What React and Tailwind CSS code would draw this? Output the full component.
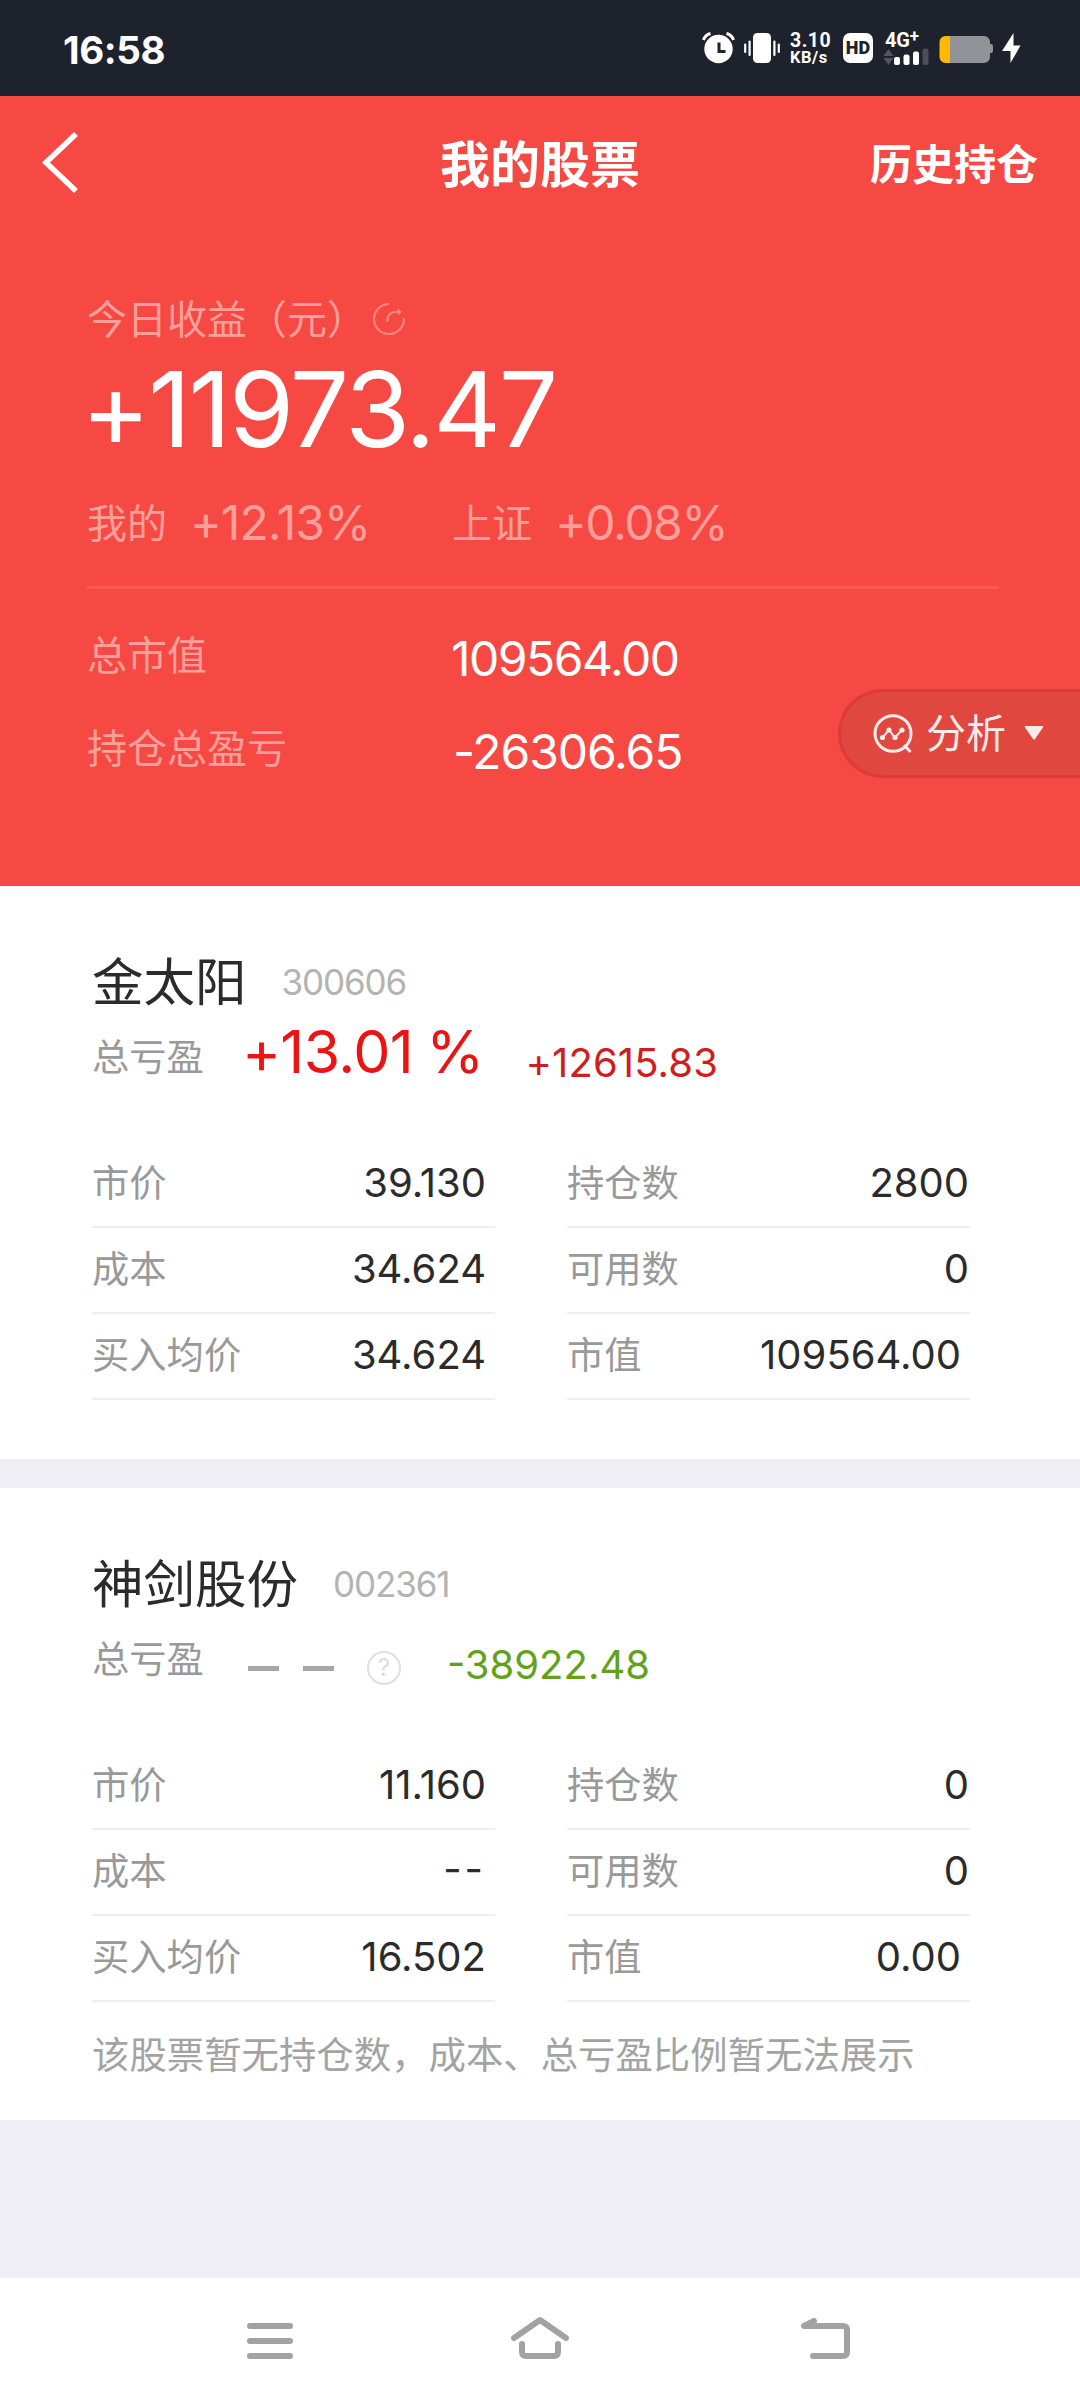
import React from 'react';

const holdings = [
    {
        name: '金太阳',
        code: '300606',
        percent: '+13.01',
        profit: '+12615.83',
        profitStyle: 'ml-[42px] tracking-[0.1px] text-[#cf1d20]',
        left: [
            {label: '市价', value: '39.130'},
            {label: '成本', value: '34.624'},
            {label: '买入均价', value: '34.624'},
        ],
        right: [
            {label: '持仓数', value: '2800', flush: true},
            {label: '可用数', value: '0', flush: true},
            {label: '市值', value: '109564.00'},
        ],
    },
    {
        name: '神剑股份',
        code: '002361',
        percent: null,
        profit: '-38922.48',
        profitStyle: 'ml-[46px] tracking-[0px] text-[#62a11a]',
        left: [
            {label: '市价', value: '11.160'},
            {label: '成本', value: '--', dashes: true},
            {label: '买入均价', value: '16.502'},
        ],
        right: [
            {label: '持仓数', value: '0', flush: true},
            {label: '可用数', value: '0', flush: true},
            {label: '市值', value: '0.00'},
        ],
        note: '该股票暂无持仓数，成本、总亏盈比例暂无法展示',
    },
];

const StatusBar = () => (
    <div className="flex h-[96px] items-center bg-[#1e222c] pl-[63px] text-white">
        <span className="pt-[4px] font-['Inter'] text-[38.5px] font-bold leading-none tracking-[-0.4px]">16:58</span>
        {/* Alarm, vibrate */}
        <svg className="ml-auto" width="80" height="32" viewBox="0 0 80 32">
            <circle cx="16.5" cy="17" r="14.2" fill="#fff"/>
            <path d="M1.5 8 Q3 3 8.500 1.500M31.500 8 Q30 3 24.500 1.500" fill="none" stroke="#fff" strokeWidth="3"/>
            <path d="M17 10.500V19.500H23.500" fill="none" stroke="#1e222c" strokeWidth="3"/>
            <rect x="51" y="1" width="18" height="30" rx="4.500" fill="#fff"/>
            <path d="M43.200 12.500V20M47.600 9.500V23M72.400 9.500V23M76.800 12.500V20" stroke="#fff" strokeWidth="2.200"
                  strokeLinecap="round"/>
        </svg>
        <div className="ml-[8px] flex w-[44px] flex-col gap-px font-['Roboto'] font-bold">
            <span className="text-[19.5px] leading-[17px] tracking-[0.5px]">3.10</span>
            <span className="text-[16.5px] leading-[15px] tracking-[0.5px]">KB/s</span>
        </div>
        {/* HD voice */}
        <div
            className="ml-[9px] flex h-[30px] w-[30px] items-center justify-center rounded-[7px] bg-white font-['Roboto'] text-[18px] font-black leading-none text-[#1e222c]">
            HD
        </div>
        {/* Signal */}
        <div className="ml-[10px] flex w-[48px] flex-col">
            <div className="flex h-[16px] pl-[2px] font-['Roboto'] font-bold">
                <span className="text-[20px] leading-[16px] tracking-[-0.2px]">4G</span>
                <span className="text-[17px] leading-[9px]">+</span>
            </div>
            <svg width="48" height="17" viewBox="0 0 48 17">
                <path d="M0.500 8L5.500 1L10.500 8ZM0.500 10L5.500 17L10.500 10Z" fill="#54565f"/>
                <rect x="11" y="9" width="6" height="8" rx="2" fill="#fff"/>
                <rect x="20.500" y="6.500" width="6" height="10.500" rx="2" fill="#fff"/>
                <rect x="30" y="3.500" width="6" height="13.500" rx="2" fill="#fff"/>
                <rect x="39.500" y="0.500" width="6" height="16.500" rx="2" fill="#4c4f59"/>
            </svg>
        </div>
        {/* Battery */}
        <svg className="ml-[8px] mr-[59px]" width="82" height="32" viewBox="0 0 82 32">
            <path d="M11 4H45a6 6 0 0 1 6 6v2h1a2 2 0 0 1 2 2v5a2 2 0 0 1-2 2h-1v4a6 6 0 0 1-6 6H11Z" fill="#919399"/>
            <path d="M11 4H6.500a6 6 0 0 0-6 6v15a6 6 0 0 0 6 6H11Z" fill="#ffb900"/>
            <path d="M74.500 1L63 19H71.500V31L81.500 13.500H74.500Z" fill="#fff"/>
        </svg>
    </div>
);

const Header = () => (
    <div className="grid h-[134px] grid-cols-3 items-center text-white">
        <svg className="ml-[40px]" width="40" height="64" viewBox="0 0 40 64">
            <path d="M36 3L6 31.500L36 60" fill="none" stroke="#fff" strokeWidth="5.500"/>
        </svg>
        <h1 className="-mt-[5px] text-center text-[50px] font-bold leading-none">我的股票</h1>
        <span className="-mt-[3px] mr-[42px] text-right text-[42px] font-bold leading-none">历史持仓</span>
    </div>
);

const Summary = () => (
    <div className="pl-[87px] pr-[81px] pt-[57px]">
        <div className="flex h-[60px] items-center text-[40px] text-[#ff9f9b]">
            <span>今日收益（元）</span>
            <svg className="ml-[5px] mt-[4px]" width="34" height="34" viewBox="0 0 34 34" fill="none" stroke="#fc8580"
                 strokeWidth="2.200">
                <path d="M17 2A15 15 0 1 0 32 16"/>
                <path d="M15.500 20C15 14 17.500 10 24 10H28"/>
                <path d="M25.500 6L29.500 10L26 13.500Z" fill="#fc8580" stroke="none"/>
            </svg>
        </div>
        <div
            className="-ml-[6px] mt-[2px] h-[120px] font-['Inter'] text-[105px] font-[370] leading-[120px] tracking-[-2.3px] text-white">
            +11973.47
        </div>
        <div className="mt-[22px] flex h-[60px] items-center text-[40px] text-[#ff9f9b]">
            <div className="flex w-[365px] items-center">
                <span>我的</span>
                <span
                    className="ml-[23px] pt-[3px] font-['Inter'] text-[48px] font-[370] tracking-[-0.9px]">+12.13%</span>
            </div>
            <span>上证</span>
            <span className="ml-[23px] pt-[3px] font-['Inter'] text-[48px] font-[370] tracking-[-1.4px]">+0.08%</span>
        </div>
        <div className="mt-[35px] h-[3px] bg-[#f75b56]"/>
        <div className="mt-[34px] flex h-[60px] items-center">
            <span className="w-[364px] text-[40px] text-[#ff9f9b]">总市值</span>
            <span
                className="pt-[12px] font-['Inter'] text-[48px] font-[370] tracking-[-1.5px] text-white">109564.00</span>
        </div>
        <div className="mt-[33px] flex h-[60px] items-center">
            <span className="w-[366px] text-[40px] text-[#ff9f9b]">持仓总盈亏</span>
            <span
                className="pt-[12px] font-['Inter'] text-[48px] font-[370] tracking-[-1.1px] text-white">-26306.65</span>
        </div>
    </div>
);

const AnalyseButton = () => (
    <button
        className="absolute right-0 top-[689px] flex h-[89px] w-[242px] items-center rounded-l-full border-[3px] border-r-0 border-[#dc3b3b] bg-[#df473f] pl-[32px] text-[#ffecea]">
        <svg width="40" height="40" viewBox="0 0 40 40" fill="none" stroke="#ffecea" strokeWidth="3">
            <ellipse cx="20" cy="19.500" rx="18" ry="17.800"/>
            <path d="M31 31L37.500 38"/>
            <path d="M9.500 23.500L16 16L22 23.500L29 16" strokeWidth="2"/>
            <g fill="#ffecea" stroke="none">
                <circle cx="9.5" cy="23.5" r="2.600"/>
                <circle cx="16" cy="16" r="2.600"/>
                <circle cx="22" cy="23.5" r="2.600"/>
                <circle cx="29" cy="16" r="2.600"/>
            </g>
        </svg>
        <span className="-mt-[5px] ml-[13px] text-[40px] leading-none">分析</span>
        <svg className="-mt-[2px] ml-[18px]" width="20" height="14" viewBox="0 0 20 14">
            <path d="M1.500 0H18.500Q20 0 19 1.500L11 13Q10 14 9 13L1 1.500Q0 0 1.500 0Z" fill="#ffecea"/>
        </svg>
    </button>
);

const Column = ({rows}) => (
    <div className="w-[403px]">
        {rows.map((row) => (
            <div key={row.label}
                 className="flex h-[86px] items-center justify-between border-b-2 border-[#eeeeee] pb-[2px]">
                <span className="-mt-[3px] text-[37.3px] text-[#999]">{row.label}</span>
                <span
                    className={`font-['Inter'] text-[40px] font-[370] text-[#2b2b2b] ${row.flush ? 'pr-[1px]' : 'pr-[9px]'} ${row.dashes ? '-mt-[5px] tracking-[3px]' : 'tracking-[0px]'}`}>
                    {row.value}
                </span>
            </div>
        ))}
    </div>
);

const Holding = ({stock}) => (
    <section className="bg-white pl-[92px] pr-[110px]">
        <div className="flex h-[126px] items-end pb-[3px]">
            <h2 className="text-[51.5px] leading-[60px] text-[#2b2b2b]">{stock.name}</h2>
            <span
                className="ml-[35px] font-['Inter'] text-[35px] font-[370] leading-[54px] tracking-[-1.1px] text-[#b3b3b3]">{stock.code}</span>
        </div>
        <div className="flex h-[86px] items-center">
            <span className="pt-[2px] text-[37.3px] text-[#999]">总亏盈</span>
            {stock.percent ? (
                <div
                    className="-mt-[7px] ml-[38px] flex font-['Inter'] text-[59px] font-[370] leading-none tracking-[-0.6px] text-[#ec1313]">
                    <span>{stock.percent}</span>
                    <span className="ml-[13px]">%</span>
                </div>
            ) : (
                <div className="ml-[44px] flex items-center pt-[22px]">
                    <div className="h-[5px] w-[31px] bg-[#a6a6a6]"/>
                    <div className="ml-[24px] h-[5px] w-[31px] bg-[#a6a6a6]"/>
                    <div
                        className="ml-[33px] flex h-[34px] w-[34px] items-center justify-center rounded-full border-2 border-[#e0e0e0] font-['Inter'] text-[24px] leading-none text-[#dcdcdc]">?
                    </div>
                </div>
            )}
            <span
                className={`pt-[16px] font-['Inter'] text-[40px] font-[370] leading-none ${stock.profitStyle}`}>{stock.profit}</span>
        </div>
        <div className="flex justify-between pt-[44px]">
            <Column rows={stock.left}/>
            <Column rows={stock.right}/>
        </div>
        {stock.note &&
            <p className="whitespace-nowrap pt-[24px] text-[37.4px] leading-[54px] text-[#a3a3a3]">{stock.note}</p>}
    </section>
);

const NavBar = () => (
    <nav className="flex h-[126px] items-center bg-white pb-[6px] pl-[247px]">
        <svg width="46" height="44" viewBox="0 0 46 44" stroke="#a2a2a2" strokeWidth="6" strokeLinecap="round">
            <path d="M3 10H43M3 25H43M3 40H43"/>
        </svg>
        <svg className="ml-[218px]" width="58" height="44" viewBox="0 0 58 44" fill="none" stroke="#a2a2a2"
             strokeWidth="6" strokeLinecap="round" strokeLinejoin="round">
            <path d="M3 22L29 4L55 22"/>
            <path d="M11 28V36Q11 40 15 40H43Q47 40 47 36V28"/>
        </svg>
        <svg className="ml-[232px]" width="49" height="44" viewBox="0 0 49 44" fill="none" stroke="#a2a2a2"
             strokeWidth="6" strokeLinecap="round" strokeLinejoin="round">
            <path d="M13 5L3 10H42Q46 10 46 14V36Q46 40 42 40H12"/>
        </svg>
    </nav>
);

const App = () => (
    <div
        className="flex h-[2404px] w-[1080px] flex-col overflow-hidden bg-[#efeef4] font-['Noto_Sans_CJK_SC',sans-serif]">
        <StatusBar/>
        <main className="flex-1">
            <div className="h-[790px] bg-[#f64944]">
                <Header/>
                <Summary/>
            </div>
            <AnalyseButton/>
            <div className="flex flex-col gap-[29px]">
                <div className="h-[573px] bg-white"><Holding stock={holdings[0]}/></div>
                <div className="h-[632px] bg-white"><Holding stock={holdings[1]}/></div>
            </div>
        </main>
        <NavBar/>
    </div>
);

export default App;
